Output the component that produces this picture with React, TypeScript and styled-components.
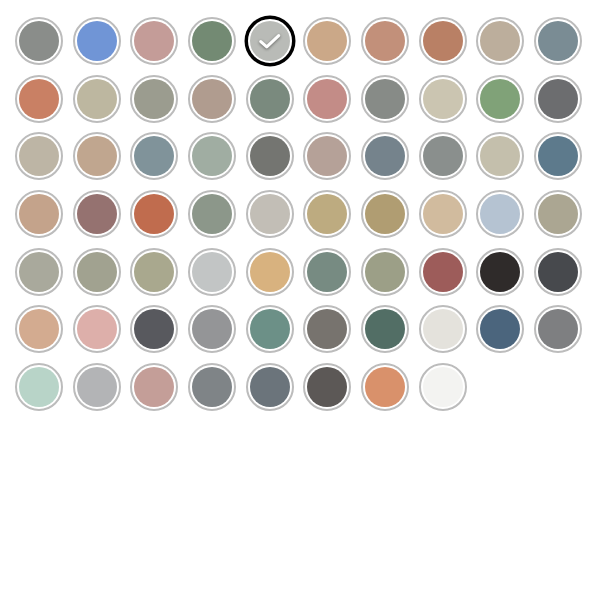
import React, { useState } from 'react';
import styled, { createGlobalStyle } from 'styled-components';

const GlobalStyle = createGlobalStyle`
  body {
    margin: 0;
    background: #ffffff;
    font-family: "Liberation Sans", Arial, sans-serif;
  }
`;

// paint swatches, row by row
const colors = [
  '#8a8d8a', '#7095d6', '#c49c98', '#738a73', '#b9bbb7', '#cba888', '#c2907a', '#b98065', '#bcae9c', '#7a8c94',
  '#c98064', '#bdb7a0', '#9b9c8f', '#b09c8f', '#7a8a7e', '#c38c87', '#878b87', '#cbc5b1', '#80a278', '#6c6d6f',
  '#bdb5a5', '#c0a68f', '#80939a', '#a0ada2', '#747571', '#b5a198', '#75838c', '#8a8f8d', '#c4bfac', '#5d7a8c',
  '#c4a38b', '#957270', '#c06c4e', '#8c978a', '#c2beb6', '#bdab80', '#b09d72', '#d1bb9e', '#b5c3d2', '#aba692',
  '#a9a99c', '#a1a290', '#a9a88e', '#c2c5c5', '#d8b27f', '#778b82', '#9c9f87', '#9d5c5a', '#2f2b2a', '#47494d',
  '#d3ab90', '#ddafaa', '#58595e', '#949597', '#6c9087', '#77736e', '#526e65', '#e4e2dc', '#4b657d', '#7e7f81',
  '#b8d4c8', '#b3b4b6', '#c49e98', '#7f8487', '#6b747b', '#5c5856', '#d9916b', '#f3f3f1',
];

const Palette = styled.div`
  display: grid;
  grid-template-columns: repeat(10, 48px);
  column-gap: 9.67px;
  row-gap: 9.67px;
  padding: 17px 15px;
`;

const Swatch = styled.button<{ $selected: boolean }>`
  position: relative;
  width: 48px;
  height: 48px;
  padding: 2px;
  margin: 0;
  border-radius: 50%;
  border: 2px solid ${p => (p.$selected ? '#000000' : '#bcbcbc')};
  box-shadow: ${p => (p.$selected ? '0 0 0 1.5px #000000' : 'none')};
  background: #ffffff;
  cursor: pointer;
  display: flex;
  align-items: center;
  justify-content: center;
`;

const Fill = styled.span`
  width: 100%;
  height: 100%;
  border-radius: 50%;
  display: flex;
  align-items: center;
  justify-content: center;
`;

const Check = styled.svg`
  width: 26px;
  height: 26px;
  filter: drop-shadow(0 1px 1.5px rgba(0, 0, 0, 0.45));
`;

const CheckIcon = () => (
  <Check viewBox="0 0 24 24" fill="none" stroke="#ffffff" strokeWidth="2.8" strokeLinecap="round" strokeLinejoin="round">
    <polyline points="3.5 12.5 9 17.5 20 7" />
  </Check>
);

export default function App() {
  const [selected, setSelected] = useState(4);
  return (
    <>
      <GlobalStyle />
      <Palette>
        {colors.map((c, i) => (
          <Swatch key={i} $selected={i === selected} onClick={() => setSelected(i)} aria-label={c}>
            <Fill style={{ background: c }}>{i === selected && <CheckIcon />}</Fill>
          </Swatch>
        ))}
      </Palette>
    </>
  );
}
